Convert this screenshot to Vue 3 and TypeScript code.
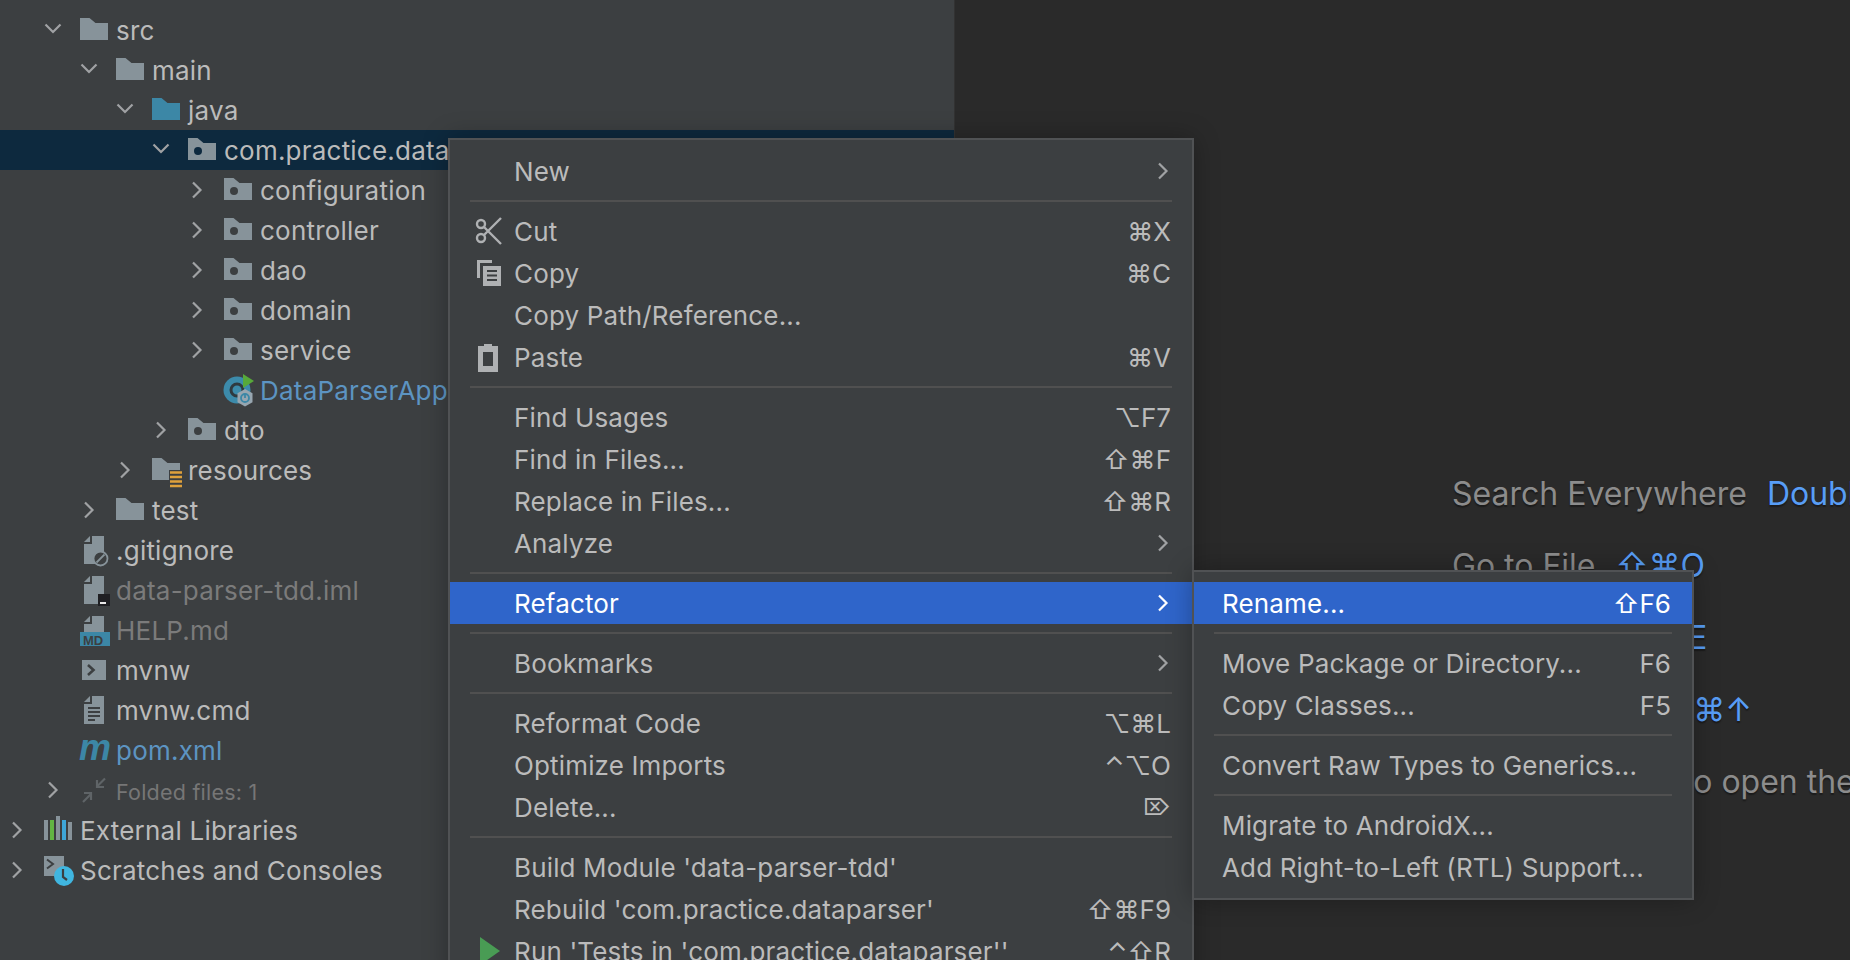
<script setup lang="ts">
interface Row {
  name: string
  level: number
  arrow?: 'down' | 'right'
  icon: string
  tone?: string
  selected?: boolean
}
interface MenuItem {
  label?: string
  keys?: string
  sub?: boolean
  icon?: string
  active?: boolean
  sep?: boolean
}

const rows: Row[] = [
  { name: 'src', level: 1, arrow: 'down', icon: 'folder' },
  { name: 'main', level: 2, arrow: 'down', icon: 'folder' },
  { name: 'java', level: 3, arrow: 'down', icon: 'source' },
  { name: 'com.practice.dataparser', level: 4, arrow: 'down', icon: 'package', selected: true },
  { name: 'configuration', level: 5, arrow: 'right', icon: 'package' },
  { name: 'controller', level: 5, arrow: 'right', icon: 'package' },
  { name: 'dao', level: 5, arrow: 'right', icon: 'package' },
  { name: 'domain', level: 5, arrow: 'right', icon: 'package' },
  { name: 'service', level: 5, arrow: 'right', icon: 'package' },
  { name: 'DataParserApplication', level: 5, icon: 'spring', tone: 'blue' },
  { name: 'dto', level: 4, arrow: 'right', icon: 'package' },
  { name: 'resources', level: 3, arrow: 'right', icon: 'resources' },
  { name: 'test', level: 2, arrow: 'right', icon: 'folder' },
  { name: '.gitignore', level: 1, icon: 'ignore' },
  { name: 'data-parser-tdd.iml', level: 1, icon: 'iml', tone: 'dim' },
  { name: 'HELP.md', level: 1, icon: 'md', tone: 'dim' },
  { name: 'mvnw', level: 1, icon: 'shell' },
  { name: 'mvnw.cmd', level: 1, icon: 'text' },
  { name: 'pom.xml', level: 1, icon: 'maven', tone: 'blue' },
  { name: 'Folded files: 1', level: 1, arrow: 'right', icon: 'folded', tone: 'folded' },
  { name: 'External Libraries', level: 0, arrow: 'right', icon: 'libs' },
  { name: 'Scratches and Consoles', level: 0, arrow: 'right', icon: 'scratch' },
]

const mainMenu: MenuItem[] = [
  { label: 'New', sub: true },
  { sep: true },
  { label: 'Cut', keys: '⌘X', icon: 'cut' },
  { label: 'Copy', keys: '⌘C', icon: 'copy' },
  { label: 'Copy Path/Reference...' },
  { label: 'Paste', keys: '⌘V', icon: 'paste' },
  { sep: true },
  { label: 'Find Usages', keys: '⌥F7' },
  { label: 'Find in Files...', keys: '⇧⌘F' },
  { label: 'Replace in Files...', keys: '⇧⌘R' },
  { label: 'Analyze', sub: true },
  { sep: true },
  { label: 'Refactor', sub: true, active: true },
  { sep: true },
  { label: 'Bookmarks', sub: true },
  { sep: true },
  { label: 'Reformat Code', keys: '⌥⌘L' },
  { label: 'Optimize Imports', keys: '⌃⌥O' },
  { label: 'Delete...', keys: '⌦' },
  { sep: true },
  { label: "Build Module 'data-parser-tdd'" },
  { label: "Rebuild 'com.practice.dataparser'", keys: '⇧⌘F9' },
  { label: "Run 'Tests in 'com.practice.dataparser''", keys: '⌃⇧R', icon: 'run' },
]

const subMenu: MenuItem[] = [
  { label: 'Rename...', keys: '⇧F6', active: true },
  { sep: true },
  { label: 'Move Package or Directory...', keys: 'F6' },
  { label: 'Copy Classes...', keys: 'F5' },
  { sep: true },
  { label: 'Convert Raw Types to Generics...' },
  { sep: true },
  { label: 'Migrate to AndroidX...' },
  { label: 'Add Right-to-Left (RTL) Support...' },
]

const hints = [
  { name: 'Search Everywhere', key: 'Double Shift' },
  { name: 'Go to File', key: '⇧⌘O' },
  { name: 'Recent Files', key: '⌘E' },
  { name: 'Navigation Bar', key: '⌘↑' },
  { name: 'Drop files here to open them', key: '' },
]

function indent(level: number): string {
  return `${level * 36}px`
}
</script>

<template>
  <div class="ide">
    <aside class="tree">
      <div
        v-for="row in rows"
        :key="row.name"
        class="row"
        :class="{ selected: row.selected }"
        :style="{ paddingLeft: indent(row.level) }"
      >
        <span class="arrow">
          <svg v-if="row.arrow === 'down'" width="36" height="40" viewBox="0 0 36 40">
            <path d="M9.5 14.5 17 22l7.5-7.5" class="chev" />
          </svg>
          <svg v-else-if="row.arrow === 'right'" width="36" height="40" viewBox="0 0 36 40">
            <path d="M13 12.5 20.5 20 13 27.5" class="chev" />
          </svg>
        </span>
        <svg class="icon" width="44" height="40" viewBox="0 0 44 40">
          <g v-if="row.icon === 'folder' || row.icon === 'package' || row.icon === 'resources'">
            <path d="M8 8h9.5l6 5H36v17H8z" fill="#87939a" />
            <circle v-if="row.icon === 'package'" cx="18" cy="21" r="4" class="hole" />
            <g v-if="row.icon === 'resources'">
              <rect x="25" y="20" width="14" height="17" fill="#3c3f41" />
              <path d="M26 22.500h12M26 27h12M26 31.500h12M26 36h12" stroke="#dfa13b" stroke-width="2.400" />
            </g>
          </g>
          <path v-else-if="row.icon === 'source'" d="M8 8h9.5l6 5H36v17H8z" fill="#3c87a6" />
          <g v-else-if="row.icon === 'spring'">
            <circle cx="21" cy="20" r="13.500" fill="#3c8bab" />
            <circle cx="21" cy="20" r="6" fill="none" stroke="#2f3a40" stroke-width="3" />
            <path d="M27 4 38 11 27 18z" fill="#57a93a" />
            <path d="M29 19l7.500 4.300v9L29 36.500l-7.500-4.200v-9z" fill="#97a6b0" />
            <circle cx="29" cy="28" r="4" fill="none" stroke="#3c87a6" stroke-width="1.800" />
            <path d="M29 23.500v4.500" stroke="#3c87a6" stroke-width="1.800" />
          </g>
          <g v-else-if="row.icon === 'ignore' || row.icon === 'iml' || row.icon === 'md' || row.icon === 'text'">
            <path d="M12 14h8V6h12v28H12z" fill="#87939a" />
            <path d="M12 12l6-6v6z" fill="#87939a" />
            <g v-if="row.icon === 'ignore'">
              <circle cx="28.500" cy="28.500" r="7" fill="#3c3f41" stroke="#87939a" stroke-width="1.800" />
              <path d="M24.500 32.500l8-8" stroke="#87939a" stroke-width="1.800" />
            </g>
            <g v-else-if="row.icon === 'iml'">
              <rect x="26" y="24" width="12" height="12" fill="#1f1f23" />
              <rect x="28" y="32" width="6" height="2" fill="#e8e8e8" />
            </g>
            <g v-else-if="row.icon === 'md'">
              <rect x="8" y="22" width="30" height="14" fill="#3c87a6" />
              <text x="11" y="34.500" class="md">MD</text>
            </g>
            <path v-else d="M16 18h12M16 22h12M16 26h12M16 30h7" stroke="#3c3f41" stroke-width="1.800" />
          </g>
          <g v-else-if="row.icon === 'shell'">
            <rect x="10" y="10" width="24" height="20" fill="#87939a" />
            <path d="M16 15l5.500 5-5.500 5" fill="none" stroke="#3c3f41" stroke-width="2.600" />
          </g>
          <text v-else-if="row.icon === 'maven'" x="7" y="30" class="maven">m</text>
          <g v-else-if="row.icon === 'folded'" fill="none" stroke="#5f6467" stroke-width="2.200">
            <path d="M33 8.500 25 16.500" />
            <path d="M25 10v7h7" />
            <path d="M11 32l8-8" />
            <path d="M19 30v-7h-7" />
          </g>
          <g v-else-if="row.icon === 'libs'">
            <rect x="8" y="10" width="4" height="20" fill="#87939a" />
            <rect x="14" y="10" width="4" height="20" fill="#62b543" />
            <rect x="20" y="6" width="4" height="24" fill="#87939a" />
            <rect x="26" y="10" width="4" height="20" fill="#3ea6d8" />
            <rect x="32" y="12" width="4" height="18" fill="#87939a" />
          </g>
          <g v-else-if="row.icon === 'scratch'">
            <rect x="8" y="6" width="20" height="20" fill="#87939a" />
            <path d="M11 9.500l6 4.500-6 4.500" fill="none" stroke="#3c3f41" stroke-width="2" />
            <circle cx="28" cy="26" r="10" fill="#40b6e0" />
            <path d="M27 19v8l4 3" fill="none" stroke="#3c3f41" stroke-width="2.200" />
          </g>
        </svg>
        <span class="name" :class="row.tone">{{ row.name }}</span>
      </div>
    </aside>

    <main class="editor">
      <p v-for="hint in hints" :key="hint.name" class="hint">
        {{ hint.name }}<span v-if="hint.key" class="hint-key">{{ hint.key }}</span>
      </p>
    </main>

    <div class="menu main-menu">
      <template v-for="(item, i) in mainMenu" :key="i">
        <div v-if="item.sep" class="sep"></div>
        <div v-else class="item" :class="{ active: item.active }">
          <span class="item-icon">
            <svg v-if="item.icon === 'cut'" width="30" height="30" viewBox="0 0 30 30">
              <g fill="none" stroke="#afb1b3" stroke-width="2.400">
                <circle cx="6" cy="8" r="4" />
                <circle cx="6" cy="22" r="4" />
                <path d="M9 11l17 17M9 19 26 2" />
              </g>
            </svg>
            <svg v-else-if="item.icon === 'copy'" width="30" height="30" viewBox="0 0 30 30">
              <path d="M2 2h15v3H5v15H2z" fill="#afb1b3" />
              <path d="M8 8h18v20H8z" fill="#afb1b3" />
              <path d="M12 13h10M12 17.500h10M12 22h10" stroke="#3c3f41" stroke-width="2" />
            </svg>
            <svg v-else-if="item.icon === 'paste'" width="30" height="30" viewBox="0 0 30 30">
              <path d="M3 4h6V2h8v2h6v26H3zM8 10v14h10V10z" fill="#afb1b3" fill-rule="evenodd" />
            </svg>
            <svg v-else-if="item.icon === 'run'" width="30" height="30" viewBox="0 0 30 30">
              <path d="M5 1l20 14L5 29z" fill="#499c54" />
            </svg>
          </span>
          <span class="label">{{ item.label }}</span>
          <span v-if="item.keys" class="keys" :class="{ glyph: item.keys === '⌦' }">{{ item.keys }}</span>
          <svg v-if="item.sub" class="caret" width="12" height="18" viewBox="0 0 12 18">
            <path d="M2 1.500 9.500 9 2 16.500" />
          </svg>
        </div>
      </template>
    </div>

    <div class="menu sub-menu">
      <template v-for="(item, i) in subMenu" :key="i">
        <div v-if="item.sep" class="sep"></div>
        <div v-else class="item" :class="{ active: item.active }">
          <span class="label">{{ item.label }}</span>
          <span v-if="item.keys" class="keys">{{ item.keys }}</span>
        </div>
      </template>
    </div>
  </div>
</template>

<style scoped>
.ide {
  position: relative;
  display: flex;
  width: 1850px;
  height: 960px;
  overflow: hidden;
  background: #2a2a2a;
  font-family: Inter, "Noto Sans", "DejaVu Sans", sans-serif;
  font-size: 26px;
  color: #bbbbbb;
}
.tree {
  flex: none;
  width: 955px;
  padding-top: 10px;
  box-sizing: border-box;
  background: #3c3f41;
  border-right: 1px solid #323232;
}
.row {
  display: flex;
  align-items: center;
  height: 40px;
  white-space: nowrap;
}
.row.selected {
  background: #0d293e;
}
.arrow {
  flex: none;
  width: 36px;
  height: 40px;
}
.arrow svg,
.icon {
  display: block;
  overflow: visible;
}
.icon {
  flex: none;
}
.chev {
  fill: none;
  stroke: #a0a2a4;
  stroke-width: 2.200;
}
.hole {
  fill: #3c3f41;
}
.selected .hole {
  fill: #0d293e;
}
.md {
  font-family: "Liberation Sans", sans-serif;
  font-size: 13px;
  font-weight: 700;
  fill: #3c3f41;
}
.maven {
  font-family: "Liberation Sans", sans-serif;
  font-size: 36px;
  font-style: italic;
  font-weight: 700;
  fill: #3c87a6;
}
.name {
  padding-top: 1px;
  letter-spacing: 0.22px;
}
.name.blue {
  color: #5c94c2;
}
.name.dim {
  color: #7b7b7b;
}
.name.folded {
  padding-top: 4px;
  font-size: 21.500px;
  color: #767676;
}
.editor {
  flex: 1;
  min-width: 0;
  display: flex;
  flex-direction: column;
  gap: 36px;
  padding: 476px 0 0 497px;
  overflow: hidden;
  white-space: nowrap;
  font-size: 32px;
  line-height: 36px;
  color: #8c8c8c;
  text-shadow: 0 2px 1px #1c1c1c;
}
.hint {
  margin: 0;
}
.hint-key {
  margin-left: 20px;
  color: #589df6;
}
.menu {
  position: absolute;
  box-sizing: border-box;
  padding: 10px 0;
  background: #3c3f41;
  border: 2px solid #505254;
  box-shadow: 0 0 24px rgba(0, 0, 0, 0.28);
}
.main-menu {
  left: 448px;
  top: 138px;
  width: 746px;
}
.sub-menu {
  left: 1192px;
  top: 570px;
  width: 502px;
  height: 330px;
}
.item {
  display: flex;
  align-items: center;
  height: 42px;
  padding-right: 21px;
  white-space: nowrap;
}
.item.active {
  background: #2f65ca;
  color: #ffffff;
}
.item-icon {
  flex: none;
  width: 64px;
  padding-left: 25px;
  box-sizing: border-box;
}
.item-icon svg {
  display: block;
}
.sub-menu .item {
  padding-left: 28px;
}
.label {
  flex: 1;
  letter-spacing: 0.15px;
}
.keys {
  flex: none;
}
.keys.glyph {
  font-size: 23px;
}
.caret {
  flex: none;
  margin-right: 2px;
}
.caret path {
  fill: none;
  stroke: #a0a2a4;
  stroke-width: 2.200;
}
.active .caret path {
  stroke: #ffffff;
}
.sep {
  height: 2px;
  margin: 8px 20px;
  background: #505050;
}
</style>
